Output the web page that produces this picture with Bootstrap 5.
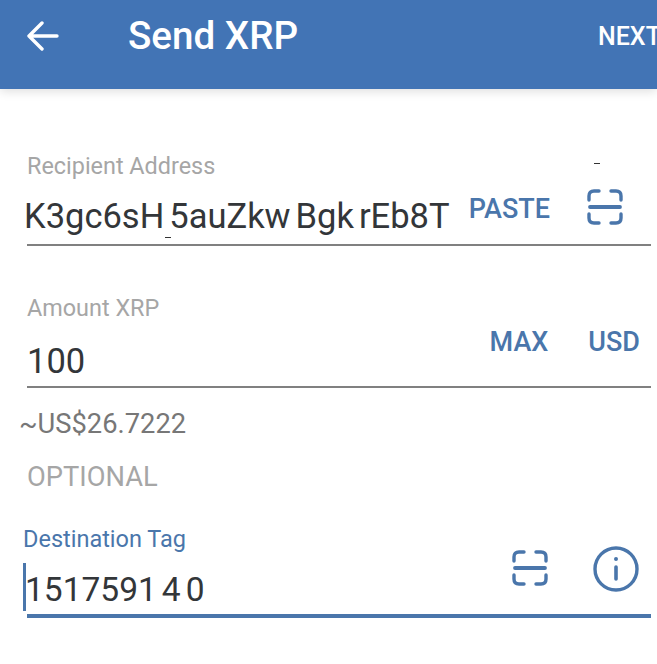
<!DOCTYPE html>
<html lang="en">
<head>
  <meta charset="UTF-8" />
  <meta name="viewport" content="width=device-width, initial-scale=1.0" />
  <title>Send XRP</title>
  <link href="https://cdn.jsdelivr.net/npm/bootstrap@5.3.3/dist/css/bootstrap.min.css" rel="stylesheet" />
  <style>
    :root {
      --xrp-blue: #4274b5;
      --xrp-link: #4a76ab;
      --xrp-text: #333639;
      --xrp-muted: #a6a6a6;
    }
    html, body { height: 100%; overflow: hidden; }
    body { background: #fff; font-family: Roboto, "Liberation Sans", sans-serif; color: var(--xrp-text); position: relative; }

    .top-bar {
      height: 89px;
      background: var(--xrp-blue);
      color: #fff;
      box-shadow: 0 2px 10px rgba(0, 0, 0, .14);
      white-space: nowrap;
    }
    .back-arrow { width: 32px; height: 30px; margin-left: 27px; margin-top: -17px; flex: none; }
    .bar-title { font-size: 38.6px; font-weight: 500; margin: -16px 0 0 69px; line-height: 1; }
    .bar-next { font-size: 25px; font-weight: 500; margin: -17px 0 0 auto; width: 59px; overflow: hidden; line-height: 1; }

    .form-area { padding: 64px 6px 0 27px; }
    .field-label { font-size: 23.4px; line-height: 27px; color: var(--xrp-muted); }
    .field-line { border-bottom: 2px solid #808080; height: 66px; }
    .field-value { font-size: 34.5px; line-height: 40px; white-space: nowrap; }
    .field-act { font-size: 27px; font-weight: 500; line-height: 1; color: var(--xrp-link); }
    .scan-icon { width: 36px; height: 36px; flex: none; }
    .info-icon { width: 46px; height: 46px; flex: none; }
    .gap-s { margin-left: 5px; }

    .usd-line { font-size: 27.3px; line-height: 30px; color: #777; margin: 21px 0 0 -8px; }
    .opt-line { font-size: 27.3px; line-height: 30px; color: var(--xrp-muted); margin-top: 23px; }

    .focus-label { font-size: 23.5px; line-height: 27px; color: var(--xrp-link); margin: 34px 0 0 -4px; }
    .focus-line { border-bottom: 4px solid var(--xrp-link); height: 65px; }
    .caret-bar { width: 3px; height: 48px; background: var(--xrp-link); margin: 6px 0 0 -4px; flex: none; }
    .tag-value { font-size: 33.5px; margin: 12px 0 0 -1px; }

    .speck { position: absolute; height: 1px; width: 6px; background: #333; }
  </style>
</head>
<body>
  <div class="top-bar d-flex align-items-center">
    <svg class="back-arrow" viewBox="0 0 32 30" fill="none" stroke="#fff" stroke-width="3.4" stroke-linecap="round" stroke-linejoin="round">
      <path d="M2 15H30M15 2L2 15L15 28" />
    </svg>
    <div class="bar-title">Send XRP</div>
    <div class="bar-next">NEXT</div>
  </div>

  <div class="form-area">
    <div class="field-label">Recipient Address</div>
    <div class="field-line d-flex align-items-center">
      <div class="field-value" style="margin:8px 0 0 -3px">K3gc6sH<span class="gap-s">5auZkw</span><span class="gap-s">Bgk</span><span class="gap-s">rEb8T</span></div>
      <div class="field-act ms-auto" style="margin-top:-6px">PASTE</div>
      <svg class="scan-icon" style="margin:-10px 28px 0 37px" viewBox="0 0 36 36" fill="none" stroke="#4a76ab" stroke-width="3.4" stroke-linecap="round">
        <path d="M2 11V7Q2 2 7 2H12M24 2H29Q34 2 34 7V11M2 25V29Q2 34 7 34H12M24 34H29Q34 34 34 29V25" />
        <path d="M3 18H33" stroke-width="3.8" />
      </svg>
    </div>

    <div class="field-label" style="margin-top:49px">Amount XRP</div>
    <div class="field-line d-flex align-items-center">
      <div class="field-value" style="margin-top:14px">100</div>
      <div class="field-act ms-auto" style="margin-top:-24px">MAX</div>
      <div class="field-act" style="margin:-24px 11px 0 40px">USD</div>
    </div>

    <div class="usd-line">~US$26.7222</div>
    <div class="opt-line">OPTIONAL</div>

    <div class="focus-label">Destination Tag</div>
    <div class="focus-line d-flex align-items-center">
      <div class="caret-bar"></div>
      <div class="field-value tag-value">1517591<span class="gap-s">4</span><span class="gap-s">0</span></div>
      <svg class="scan-icon ms-auto" style="margin-top:-31px" viewBox="0 0 36 36" fill="none" stroke="#4a76ab" stroke-width="3.4" stroke-linecap="round">
        <path d="M2 11V7Q2 2 7 2H12M24 2H29Q34 2 34 7V11M2 25V29Q2 34 7 34H12M24 34H29Q34 34 34 29V25" />
        <path d="M3 18H33" stroke-width="3.8" />
      </svg>
      <svg class="info-icon" style="margin:-30px 12px 0 45px" viewBox="0 0 46 46" fill="none" stroke="#4a76ab" stroke-width="3.4" stroke-linecap="round">
        <circle cx="23" cy="23" r="21" />
        <path d="M23 21V33" stroke-width="3.6" />
        <circle cx="23" cy="13" r="1.2" fill="#4a76ab" stroke-width="1.6" />
      </svg>
    </div>
  </div>

  <div class="speck" style="left:594px;top:163px"></div>
  <div class="speck" style="left:165px;top:237px"></div>
</body>
</html>
